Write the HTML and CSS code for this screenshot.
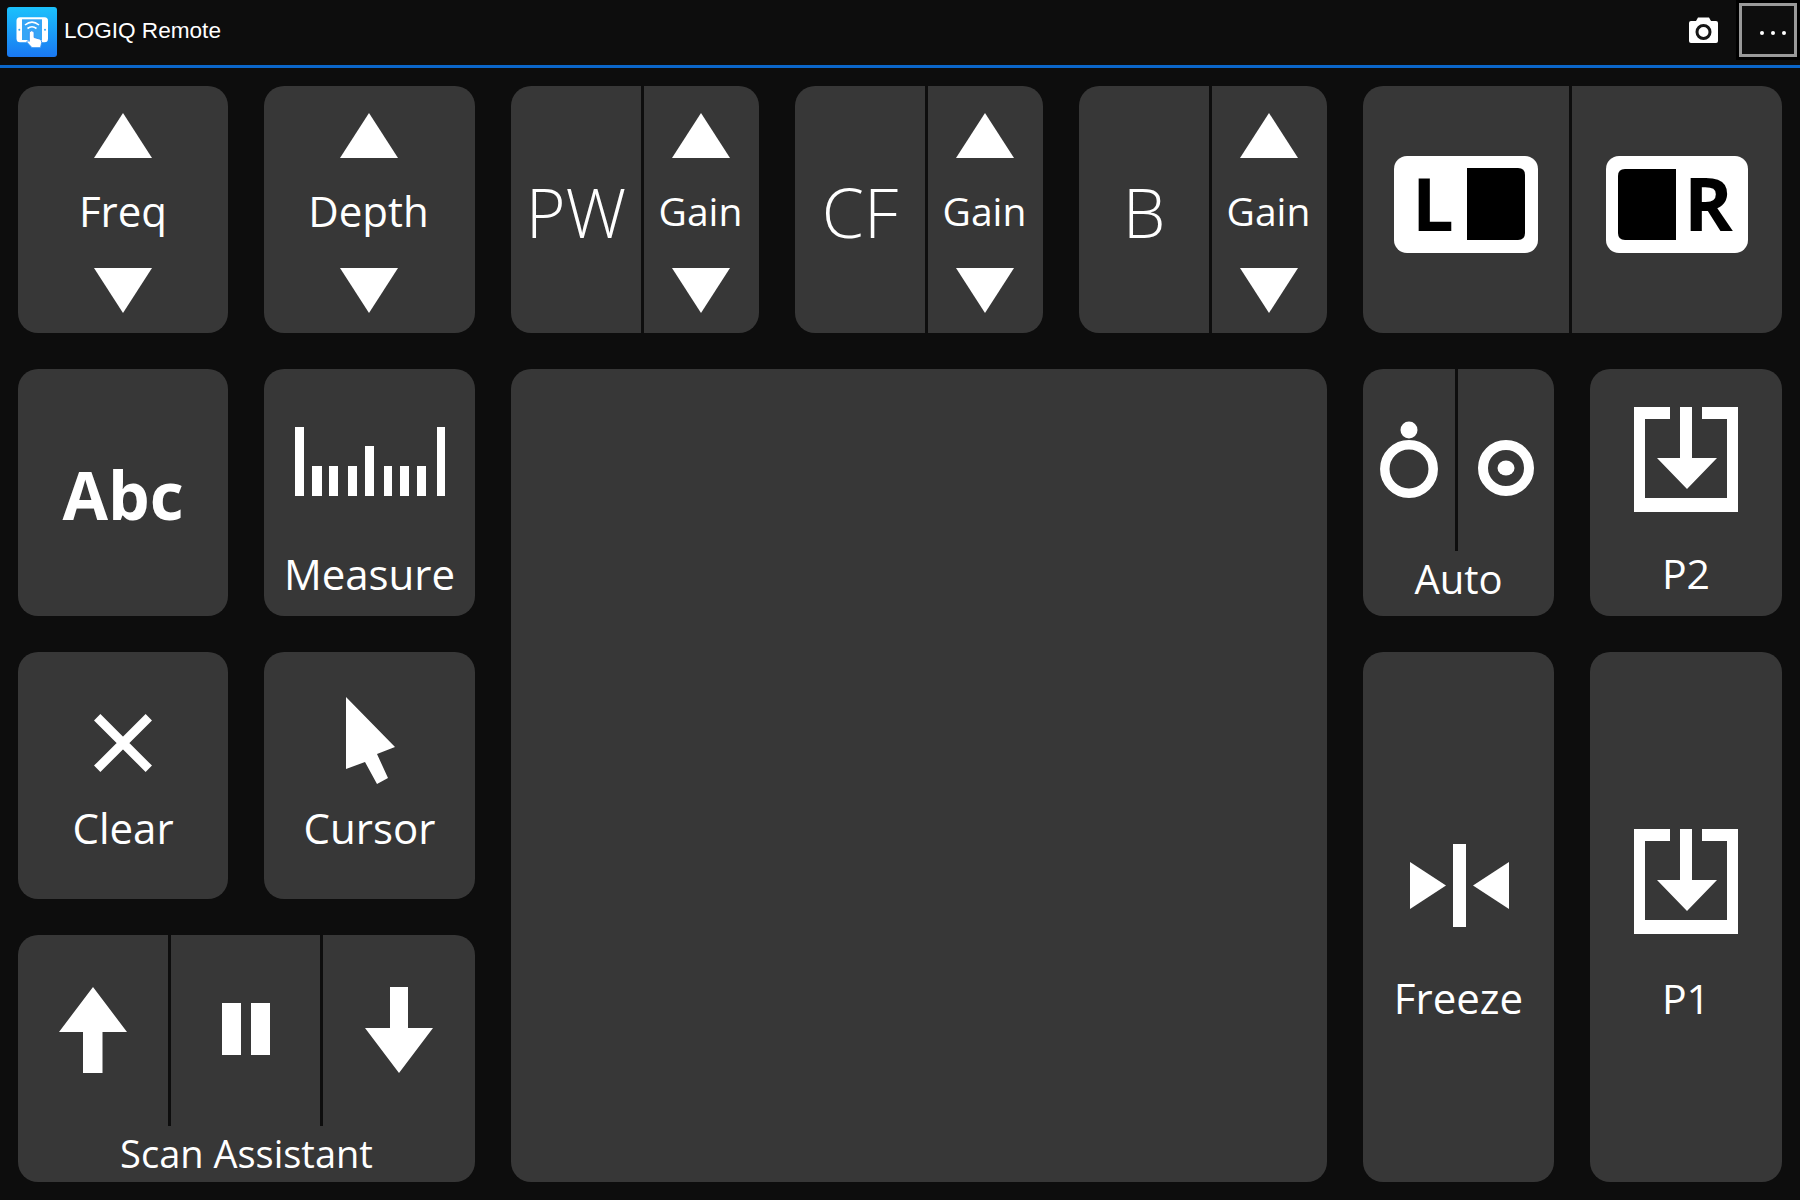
FILE: index.html
```html
<!DOCTYPE html>
<html lang="en">
<head>
  <meta charset="UTF-8" />
  <title>LOGIQ Remote</title>
  <link rel="stylesheet" href="styles.css">
</head>
<body>

  <svg class="defs" width="0" height="0">
    <symbol id="tri-up" viewBox="0 0 58 45"><polygon points="29,0 58,45 0,45" /></symbol>
    <symbol id="tri-down" viewBox="0 0 58 45"><polygon points="0,0 58,0 29,45" /></symbol>
    <symbol id="preset" viewBox="0 0 104 105">
      <path d="M0 0H36V12H11V91H93V12H68V0H104V105H0Z" />
      <path d="M46 0H58V51H83L53 82L23 51H46Z" />
    </symbol>
  </svg>

  <header class="topbar">
    <svg class="logo" viewBox="0 0 50 50" width="50" height="50">
      <defs>
        <linearGradient id="logo-bg" x1="0" y1="0" x2="0" y2="1">
          <stop offset="0" stop-color="#1bc2fc" />
          <stop offset="1" stop-color="#1a78f2" />
        </linearGradient>
      </defs>
      <rect width="50" height="50" rx="3" fill="url(#logo-bg)" />
      <rect x="9.500" y="10.300" width="31.500" height="25" rx="3.500" fill="#fff" />
      <rect x="15" y="12.300" width="20" height="20.700" fill="#35a5f6" />
      <circle cx="12.300" cy="22.800" r="1" fill="#35a5f6" />
      <circle cx="38" cy="22.800" r="1" fill="#35a5f6" />
      <path d="M18 18q7-5.800 14 0M20.500 21.500q4.500-3.400 9 0" fill="none" stroke="#fff" stroke-width="1.600" />
      <path d="M22.300 25q2.400-2.600 4.800 0V30.500L32.500 32Q35 33 34.700 35.500L33.500 40.700H25L19.700 35L20.800 33.500L22.300 34.300Z" fill="#fff" stroke="#2a8ff3" stroke-width="0.900" />
    </svg>
    <div class="app-title">LOGIQ Remote</div>
    <svg class="camera" viewBox="0 0 29 26" width="29" height="26">
      <path d="M2 4H7L9 0.500H20L22 4H27Q29 4 29 6V24Q29 26 27 26H2Q0 26 0 24V6Q0 4 2 4Z" fill="#fff" />
      <circle cx="14.500" cy="15" r="6.500" fill="#fff" stroke="#161616" stroke-width="3" />
    </svg>
    <div class="more">
      <div class="more-box"><i></i><i></i><i></i></div>
    </div>
  </header>

  <main class="board">

    <div class="btn stepper">
      <svg class="tri"><use href="#tri-up" /></svg>
      <div class="label">Freq</div>
      <svg class="tri"><use href="#tri-down" /></svg>
    </div>

    <div class="btn stepper depth">
      <svg class="tri"><use href="#tri-up" /></svg>
      <div class="label">Depth</div>
      <svg class="tri"><use href="#tri-down" /></svg>
    </div>

    <div class="btn split">
      <div class="mode">PW</div>
      <div class="stepper gain">
        <svg class="tri"><use href="#tri-up" /></svg>
        <div class="label">Gain</div>
        <svg class="tri"><use href="#tri-down" /></svg>
      </div>
    </div>

    <div class="btn split">
      <div class="mode">CF</div>
      <div class="stepper gain">
        <svg class="tri"><use href="#tri-up" /></svg>
        <div class="label">Gain</div>
        <svg class="tri"><use href="#tri-down" /></svg>
      </div>
    </div>

    <div class="btn split">
      <div class="mode">B</div>
      <div class="stepper gain">
        <svg class="tri"><use href="#tri-up" /></svg>
        <div class="label">Gain</div>
        <svg class="tri"><use href="#tri-down" /></svg>
      </div>
    </div>

    <div class="btn split lr">
      <div class="lr-cell">
        <svg viewBox="0 0 144 97" width="144" height="97">
          <rect width="144" height="97" rx="13" fill="#fff" />
          <path d="M73 12H124Q131 12 131 19V77Q131 84 124 84H73Z" fill="#000" />
          <text class="lr-letter" x="18" y="75">L</text>
        </svg>
      </div>
      <div class="lr-cell lr-right">
        <svg viewBox="0 0 142 97" width="142" height="97">
          <rect width="142" height="97" rx="13" fill="#fff" />
          <path d="M70 13H19Q12 13 12 20V77Q12 84 19 84H70Z" fill="#000" />
          <text class="lr-letter" x="78" y="75">R</text>
        </svg>
      </div>
    </div>

    <div class="btn abc">Abc</div>

    <div class="btn measure">
      <svg viewBox="0 0 150 69" width="150" height="69" fill="#fff">
        <rect x="0" y="0" width="9" height="69" />
        <rect x="17" y="39" width="10" height="30" />
        <rect x="34" y="39" width="9" height="30" />
        <rect x="53" y="39" width="9" height="30" />
        <rect x="70" y="19" width="9" height="50" />
        <rect x="89" y="39" width="8" height="30" />
        <rect x="105" y="39" width="9" height="30" />
        <rect x="122" y="39" width="9" height="30" />
        <rect x="142" y="0" width="8" height="69" />
      </svg>
      <div class="label">Measure</div>
    </div>

    <div class="pad"></div>

    <div class="btn auto">
      <div class="auto-icons">
        <div class="auto-cell auto-left">
          <svg viewBox="0 0 60 80" width="60" height="80">
            <circle cx="30" cy="10" r="8.500" fill="#fff" />
            <circle cx="30" cy="49" r="24.200" fill="none" stroke="#fff" stroke-width="9.500" />
          </svg>
        </div>
        <div class="auto-cell auto-right">
          <svg viewBox="0 0 60 80" width="60" height="80">
            <ellipse cx="30" cy="48" rx="8.500" ry="7.500" fill="#fff" />
            <circle cx="30" cy="48" r="23" fill="none" stroke="#fff" stroke-width="10" />
          </svg>
        </div>
      </div>
      <div class="label">Auto</div>
    </div>

    <div class="btn preset-two">
      <svg class="preset" width="104" height="105"><use href="#preset" /></svg>
      <div class="label">P2</div>
    </div>

    <div class="btn clear">
      <svg viewBox="0 0 58 58" width="58" height="58">
        <path d="M3.200 3.200L54.800 54.800M54.800 3.200L3.200 54.800" stroke="#fff" stroke-width="9" fill="none" />
      </svg>
      <div class="label">Clear</div>
    </div>

    <div class="btn cursor">
      <svg viewBox="0 0 49 87" width="49" height="87">
        <path d="M0 0L49 50L31 57L42 81L31 87L19 65L0 72Z" fill="#fff" />
      </svg>
      <div class="label">Cursor</div>
    </div>

    <div class="btn freeze">
      <svg viewBox="0 0 99 83" width="99" height="83" fill="#fff">
        <polygon points="0,18 36,41.500 0,65" />
        <rect x="43" y="0" width="13" height="83" />
        <polygon points="63,41.500 99,18 99,65" />
      </svg>
      <div class="label">Freeze</div>
    </div>

    <div class="btn preset-one">
      <svg class="preset" width="104" height="105"><use href="#preset" /></svg>
      <div class="label">P1</div>
    </div>

    <div class="btn scan">
      <div class="scan-icons">
        <div class="scan-cell scan-up">
          <svg viewBox="0 0 68 86" width="68" height="86">
            <polygon points="34,0 68,45 43.500,45 43.500,86 24,86 24,45 0,45" fill="#fff" />
          </svg>
        </div>
        <div class="scan-cell scan-pause">
          <svg viewBox="0 0 48 52" width="48" height="52" fill="#fff">
            <rect width="19" height="52" />
            <rect x="29" width="19" height="52" />
          </svg>
        </div>
        <div class="scan-cell scan-down">
          <svg viewBox="0 0 68 86" width="68" height="86">
            <polygon points="25,0 43,0 43,41 68,41 34,86 0,41 25,41" fill="#fff" />
          </svg>
        </div>
      </div>
      <div class="label">Scan Assistant</div>
    </div>

  </main>

</body>
</html>
```

FILE: styles.css
```css
html, body {
  margin: 0;
  padding: 0;
  height: 100%;
  background: #0d0d0d;
  color: #fff;
  font-family: "Open Sans", sans-serif;
  overflow: hidden;
}
svg {
  display: block;
  flex: none;
}
.defs {
  position: absolute;
}

/* top bar */
.topbar {
  display: flex;
  align-items: flex-start;
  height: 65px;
  border-bottom: 3px solid #0b66c9;
}
.logo {
  margin: 7px 0 0 7px;
}
.app-title {
  flex: 1;
  margin-left: 7px;
  line-height: 62px;
  font-family: "Liberation Sans", sans-serif;
  font-size: 22.600px;
}
.camera {
  margin: 17px 18px 0 0;
}
.more {
  width: 58px;
  height: 54px;
  padding: 3px;
  background: #000;
}
.more-box {
  display: flex;
  justify-content: flex-end;
  align-items: center;
  gap: 7px;
  box-sizing: border-box;
  height: 54px;
  padding: 6px 8px 0 0;
  border: 3px solid #999;
  background: #0d0d0d;
}
.more-box i {
  width: 4px;
  height: 4px;
  border-radius: 50%;
  background: #fff;
}

/* button board */
.board {
  display: grid;
  grid-template-columns: 210px 211px 248px 248px 248px 191px 192px;
  grid-template-rows: repeat(4, 247px);
  gap: 36px;
  padding: 18px 0 0 18px;
}
.btn {
  display: flex;
  flex-direction: column;
  align-items: center;
  box-sizing: border-box;
  overflow: hidden;
  border-radius: 20px;
  background: #373737;
}
.label {
  font-size: 42px;
  line-height: 50px;
  white-space: nowrap;
}

/* up / down */
.stepper {
  display: flex;
  flex-direction: column;
  align-items: center;
  padding: 27px 0 20px;
}
.depth {
  padding-right: 2px;
}
.tri {
  width: 58px;
  height: 45px;
  fill: #fff;
}
.stepper .label {
  display: flex;
  flex: 1;
  align-items: center;
  padding-bottom: 4px;
}
.gain {
  flex: 1;
  box-sizing: border-box;
  padding-right: 2px;
  border-left: 3px solid #0d0d0d;
}
.gain .label {
  font-size: 39px;
}
.split {
  flex-direction: row;
  align-items: stretch;
}
.mode {
  display: flex;
  justify-content: center;
  align-items: center;
  width: 130px;
  padding-top: 5px;
  box-sizing: border-box;
  font-size: 68px;
  font-weight: 350;
  line-height: 64px;
}

/* left / right */
.lr {
  grid-column: 6 / 8;
}
.lr-cell {
  display: flex;
  justify-content: center;
  width: 206px;
  padding-top: 70px;
  box-sizing: border-box;
}
.lr-cell svg {
  overflow: visible;
}
.lr-right {
  flex: 1;
  border-left: 3px solid #0d0d0d;
}
.lr-letter {
  font-family: "Open Sans", sans-serif;
  font-size: 74px;
  font-weight: 700;
  fill: #000;
}

/* centre pad */
.pad {
  grid-column: 3 / 6;
  grid-row: 2 / 5;
  border-radius: 20px;
  background: #373737;
}

.abc {
  justify-content: center;
  padding-top: 2px;
  font-size: 66px;
  font-weight: 700;
  line-height: 66px;
}
.measure {
  padding: 58px 0 17px;
}
.measure .label,
.preset-two .label,
.auto .label,
.clear .label,
.cursor .label,
.freeze .label,
.preset-one .label,
.scan .label {
  margin-top: auto;
}

.auto {
  padding-bottom: 12px;
}
.auto .label {
  font-size: 40px;
}
.auto-icons {
  display: flex;
  align-self: stretch;
  height: 182px;
}
.auto-cell {
  display: flex;
  justify-content: center;
  box-sizing: border-box;
  padding-top: 51px;
}
.auto-left {
  width: 92px;
}
.auto-right {
  flex: 1;
  border-left: 3px solid #0d0d0d;
}

.preset {
  fill: #fff;
}
.preset-two {
  padding: 38px 0 18px;
}
.preset-two .label,
.preset-one .label {
  font-size: 41px;
}
.preset-one {
  grid-column: 7;
  grid-row: 3 / 5;
  padding: 177px 0 159px;
}

.clear {
  padding: 62px 0 46px;
}
.cursor {
  padding: 45px 0 46px;
}
.cursor svg {
  margin-left: 2px;
}
.freeze {
  grid-column: 6;
  grid-row: 3 / 5;
  padding: 192px 0 159px;
}
.freeze svg {
  margin-left: 2px;
}

.scan {
  grid-column: 1 / 3;
  padding-bottom: 4px;
}
.scan .label {
  font-size: 38px;
}
.scan-icons {
  display: flex;
  align-self: stretch;
  height: 191px;
}
.scan-cell {
  display: flex;
  justify-content: center;
  box-sizing: border-box;
  padding-top: 52px;
}
.scan-up {
  width: 150px;
}
.scan-pause {
  width: 155px;
  padding-top: 68px;
  border-left: 3px solid #0d0d0d;
  border-right: 3px solid #0d0d0d;
}
.scan-down {
  flex: 1;
}
```
